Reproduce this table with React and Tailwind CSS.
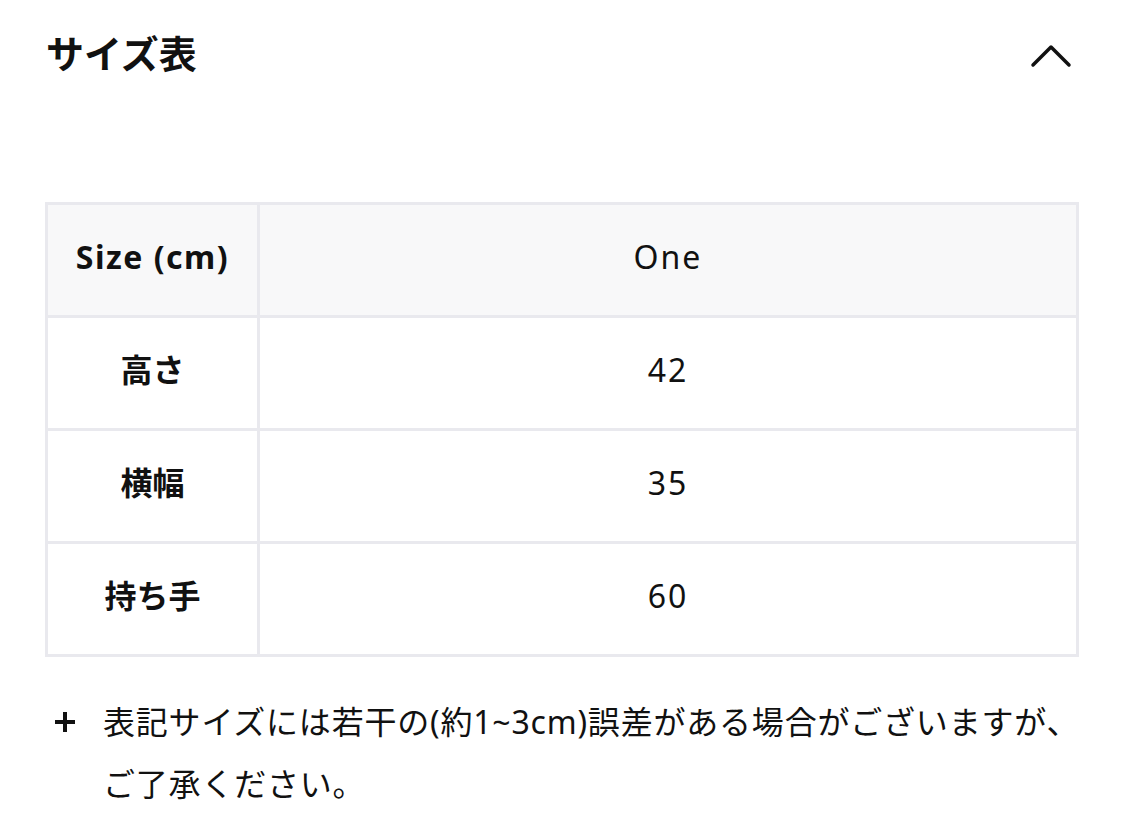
export default function App() {
  const rows = [
    ["高さ", "42"],
    ["横幅", "35"],
    ["持ち手", "60"],
  ];
  const font = { fontFamily: '"Noto Sans", "Noto Sans CJK JP", sans-serif' };
  const cell = "border-[3px] border-[#e9e9ee] text-center text-[32px] leading-[40px] pb-[6px]";
  return (
    <div className="w-[1125px] h-[822px] bg-white text-[#111] overflow-hidden" style={font}>
      <div className="px-[45px]">
        <div className="flex items-center justify-between h-[56px] mt-[25px]">
          <h2 className="text-[38px] font-bold leading-none pl-[1px]">サイズ表</h2>
          <svg width="44" height="26" viewBox="0 0 44 26" className="mr-[7px] mt-[6px]">
            <path d="M4 22 L22 4 L40 22" fill="none" stroke="#111" strokeWidth="3.5" strokeLinecap="round" strokeLinejoin="round" />
          </svg>
        </div>
        <table className="w-[1034px] mt-[121px] border-collapse border-[3px] border-[#e9e9ee] table-fixed">
          <colgroup>
            <col className="w-[212px]" />
            <col />
          </colgroup>
          <tbody>
            <tr className="bg-[#f8f8f9] h-[113px]">
              <td className={`${cell} font-bold tracking-[1.5px]`}>Size (cm)</td>
              <td className={`${cell} tracking-[2px]`}>One</td>
            </tr>
            {rows.map(([k, v]) => (
              <tr key={k} className="h-[113px]">
                <td className={`${cell} font-bold`}>{k}</td>
                <td className={`${cell} tracking-[2px]`}>{v}</td>
              </tr>
            ))}
          </tbody>
        </table>
        <div className="flex mt-[34px] pl-[9px]">
          <div className="w-[49px] h-[62px] flex items-center shrink-0">
            <svg width="22" height="22" viewBox="0 0 22 22">
              <path d="M11 1 V21 M1 11 H21" stroke="#111" strokeWidth="4" />
            </svg>
          </div>
          <p className="text-[32px] leading-[62px] tracking-[0.8px] text-[#111]">
            表記サイズには若干の(約1~3cm)誤差がある場合がございますが、<br />ご了承ください。
          </p>
        </div>
      </div>
    </div>
  );
}
